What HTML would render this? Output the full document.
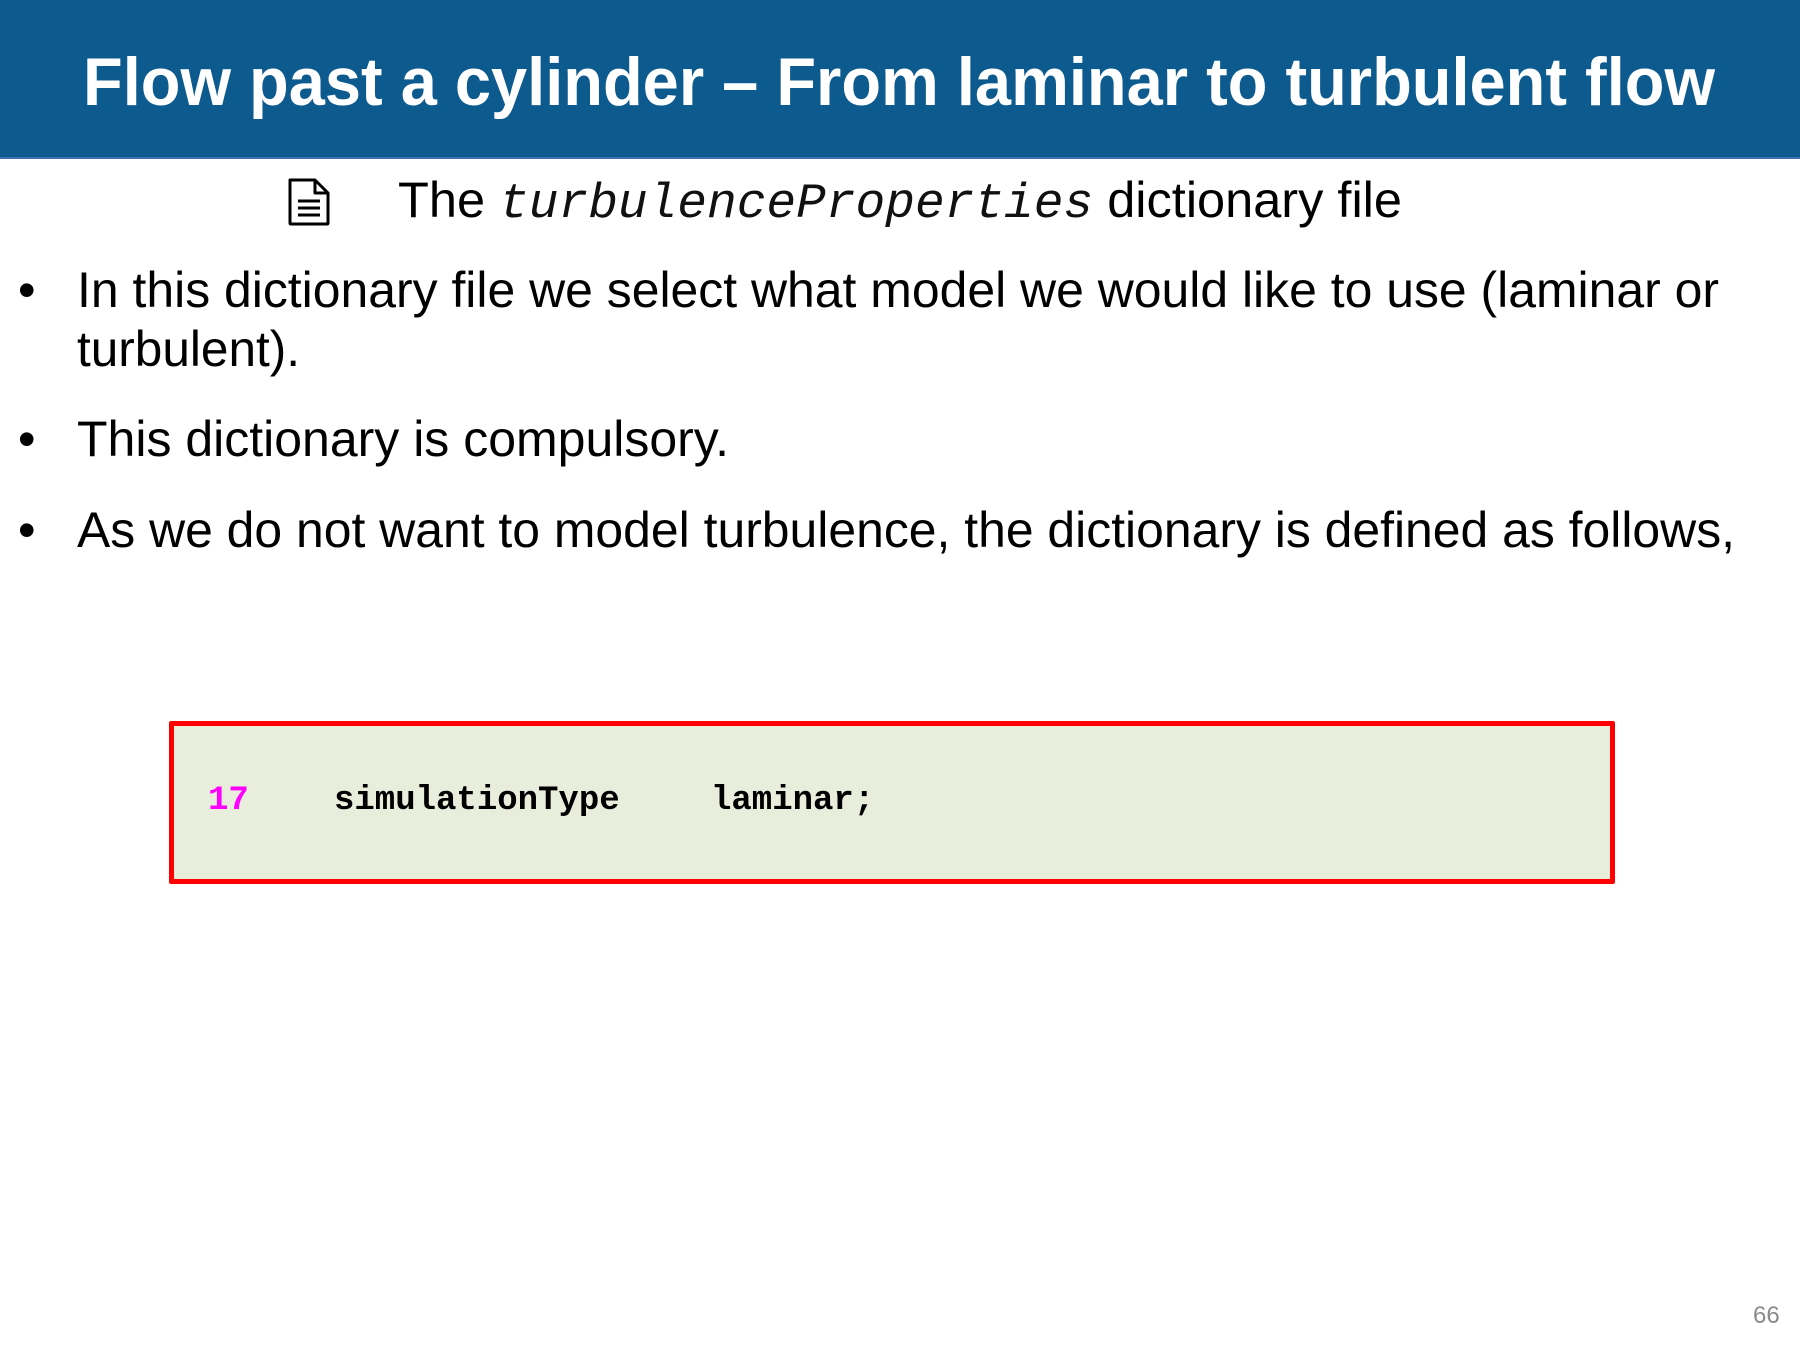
<!DOCTYPE html>
<html><head><meta charset="utf-8"><style>
html,body{margin:0;padding:0;}
body{width:1800px;height:1350px;position:relative;background:#fff;overflow:hidden;font-family:"Liberation Sans",Arial,sans-serif;}
.hdr{position:absolute;left:0;top:0;width:1800px;height:157px;background:#0c5a8e;border-bottom:2px solid #3d72b0;}
.t{position:absolute;white-space:nowrap;transform-origin:0 0;line-height:1;}
.title{color:#fff;font-weight:bold;font-size:68px;}
.body{color:#000;font-size:50px;}
.mono{font-family:"Liberation Mono","Courier New",monospace;font-style:italic;font-size:49px;color:#111;}
.box{position:absolute;left:169px;top:721px;width:1436px;height:153px;background:#e9eddc;border:5px solid #ff0000;border-radius:2px;}
.code{position:absolute;font-family:"Liberation Mono","Courier New",monospace;font-weight:bold;font-size:34px;line-height:1;white-space:nowrap;}
</style></head><body>
<div class="hdr"></div>
<div class="t title" id="ti" data-w="1632" style="left:83px;top:48px;">Flow past a cylinder – From laminar to turbulent flow</div>
<svg style="position:absolute;left:287px;top:177px" width="44" height="50" viewBox="0 0 44 50">
<path d="M3 3 H28 L41 16 V46 Q41 47 40 47 H4 Q3 47 3 46 Z" fill="none" stroke="#000" stroke-width="3" stroke-linejoin="round"/>
<path d="M28 3 V16 H41" fill="none" stroke="#000" stroke-width="3" stroke-linejoin="round"/>
<path d="M11 24 H33 M11 31 H33 M11 38 H33" stroke="#000" stroke-width="3"/>
</svg>
<div class="t body" id="h1" data-w="1004" style="left:398px;top:175px;">The <span class="mono">turbulenceProperties</span> dictionary file</div>
<div class="t body" style="left:18px;top:265px;">•</div>
<div class="t body" id="b1" data-w="1642" style="left:77px;top:265px;">In this dictionary file we select what model we would like to use (laminar or</div>
<div class="t body" id="b2" data-w="223" style="left:77px;top:324px;">turbulent).</div>
<div class="t body" style="left:18px;top:414px;">•</div>
<div class="t body" id="b3" data-w="652" style="left:77px;top:414px;">This dictionary is compulsory.</div>
<div class="t body" style="left:18px;top:505px;">•</div>
<div class="t body" id="b4" data-w="1658" style="left:77px;top:505px;">As we do not want to model turbulence, the dictionary is defined as follows,</div>
<div class="box"></div>
<div class="code" style="left:208px;top:784px;color:#ff00ff;">17</div>
<div class="code" style="left:334px;top:784px;color:#000;">simulationType</div>
<div class="code" style="left:711px;top:784px;color:#000;">laminar;</div>
<div class="t" style="left:1753px;top:1304px;font-size:24px;color:#8a8a8a;">66</div>
<script>
document.querySelectorAll('[data-w]').forEach(function(e){
var w=e.getBoundingClientRect().width;var t=+e.getAttribute('data-w');
if(w>0)e.style.transform='scaleX('+(t/w)+')';});
</script>
</body></html>
